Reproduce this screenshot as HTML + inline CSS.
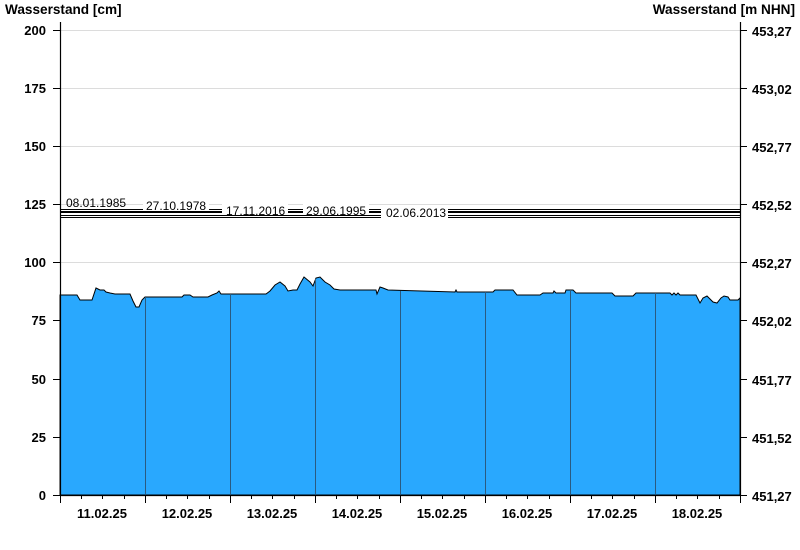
<!DOCTYPE html>
<html><head><meta charset="utf-8"><style>
html,body{margin:0;padding:0;background:#fff;width:800px;height:550px;overflow:hidden}
svg text{font-family:"Liberation Sans",Arial,sans-serif}
</style></head><body>
<svg width="800" height="550" xmlns="http://www.w3.org/2000/svg">
<text x="5" y="14" font-size="13.6" font-weight="bold">Wasserstand [cm]</text>
<text x="795" y="14" font-size="13.6" font-weight="bold" text-anchor="end">Wasserstand [m NHN]</text>
<g stroke="#dcdcdc" stroke-width="1">
<line x1="60" y1="30.5" x2="740" y2="30.5"/><line x1="60" y1="88.5" x2="740" y2="88.5"/>
<line x1="60" y1="146.5" x2="740" y2="146.5"/><line x1="60" y1="204.5" x2="740" y2="204.5"/>
<line x1="60" y1="262.5" x2="740" y2="262.5"/><line x1="60" y1="320.5" x2="740" y2="320.5"/>
<line x1="60" y1="379.5" x2="740" y2="379.5"/><line x1="60" y1="437.5" x2="740" y2="437.5"/>
</g>
<polygon fill="#29a8fe" stroke="#000" stroke-width="1" points="60,495 60,295 77,295 80,300 92,300 96,288 100,290 104,290 106,292 110,293 115,294 130,294 133,301 136,307 139,307 142,300 145,297 182,297 184,295 190,295 193,297 208,297 212,295 217,293 219,291 221,294 230,294 266,294 270,291 275,285 280,282 285,286 288,291 293,290 297,290 300,284 304,277 310,282 313,286 316,278 320,277 325,282 330,285 334,289 340,290 376,290 377,294 380,287 383,288 388,290 455,292 456,290 457,292 493,292 495,290 513,290 517,295 540,295 543,293 553,293 554,291 556,293 565,293 566,290 573,290 576,293 612,293 615,296 633,296 636,293 670,293 672,295 674,293 676,295 678,293 680,295 696,295 700,303 703,298 707,296 713,302 717,303 721,298 724,296 728,297 730,300 738,300 740,298 740,495"/>
<g stroke="#2a5a80" stroke-width="1">
<line x1="145.5" y1="297" x2="145.5" y2="495"/><line x1="230.5" y1="294" x2="230.5" y2="495"/>
<line x1="315.5" y1="279" x2="315.5" y2="495"/><line x1="400.5" y1="291" x2="400.5" y2="495"/>
<line x1="485.5" y1="292" x2="485.5" y2="495"/><line x1="570.5" y1="290" x2="570.5" y2="495"/>
<line x1="655.5" y1="293" x2="655.5" y2="495"/>
</g>
<g stroke="#000" stroke-width="1">
<line x1="60" y1="209.5" x2="740" y2="209.5"/><line x1="60" y1="211.5" x2="740" y2="211.5"/>
<line x1="60" y1="212.5" x2="740" y2="212.5"/><line x1="60" y1="215.5" x2="740" y2="215.5"/>
<line x1="60" y1="217.5" x2="740" y2="217.5"/>
</g>
<g fill="#fff">
<rect x="143" y="199" width="66" height="12"/><rect x="222" y="203" width="66" height="11"/>
<rect x="303" y="203" width="66" height="11"/><rect x="381" y="205" width="67" height="13"/>
</g>
<g font-size="12" fill="#000">
<text x="66" y="207">08.01.1985</text><text x="146" y="210">27.10.1978</text>
<text x="226" y="215">17.11.2016</text><text x="306" y="215">29.06.1995</text>
<text x="386" y="217">02.06.2013</text>
</g>
<g stroke="#000" stroke-width="1.2">
<line x1="60.5" y1="22" x2="60.5" y2="496"/><line x1="740.5" y1="22" x2="740.5" y2="496"/>
<line x1="60" y1="495.5" x2="741" y2="495.5"/>
</g>
<g stroke="#000" stroke-width="1">
<path d="M53 30.5H60M53 88.5H60M53 146.5H60M53 204.5H60M53 262.5H60M53 320.5H60M53 379.5H60M53 437.5H60M53 495.5H60"/>
<path d="M740 30.5H747M740 88.5H747M740 146.5H747M740 204.5H747M740 262.5H747M740 320.5H747M740 379.5H747M740 437.5H747M740 495.5H747"/>
<path d="M60.5 495V503M145.5 495V503M230.5 495V503M315.5 495V503M400.5 495V503M485.5 495V503M570.5 495V503M655.5 495V503M740.5 495V503"/>
<path d="M81.5 495V499M102.5 495V499M124.5 495V499M166.5 495V499M187.5 495V499M209.5 495V499M251.5 495V499M272.5 495V499M294.5 495V499M336.5 495V499M357.5 495V499M379.5 495V499M421.5 495V499M442.5 495V499M464.5 495V499M506.5 495V499M527.5 495V499M549.5 495V499M591.5 495V499M612.5 495V499M634.5 495V499M676.5 495V499M697.5 495V499M719.5 495V499"/>
</g>
<g font-size="13" font-weight="bold" text-anchor="end">
<text x="46" y="35">200</text><text x="46" y="93">175</text><text x="46" y="151">150</text>
<text x="46" y="209">125</text><text x="46" y="267">100</text><text x="46" y="325">75</text>
<text x="46" y="384">50</text><text x="46" y="442">25</text><text x="46" y="500">0</text>
</g>
<g font-size="13" font-weight="bold">
<text x="752" y="36">453,27</text><text x="752" y="94">453,02</text><text x="752" y="152">452,77</text>
<text x="752" y="210">452,52</text><text x="752" y="268">452,27</text><text x="752" y="326">452,02</text>
<text x="752" y="385">451,77</text><text x="752" y="443">451,52</text><text x="752" y="501">451,27</text>
</g>
<g font-size="13" font-weight="bold" text-anchor="middle">
<text x="102" y="518">11.02.25</text><text x="187" y="518">12.02.25</text><text x="272" y="518">13.02.25</text>
<text x="357" y="518">14.02.25</text><text x="442" y="518">15.02.25</text><text x="527" y="518">16.02.25</text>
<text x="612" y="518">17.02.25</text><text x="697" y="518">18.02.25</text>
</g>
</svg>
</body></html>
